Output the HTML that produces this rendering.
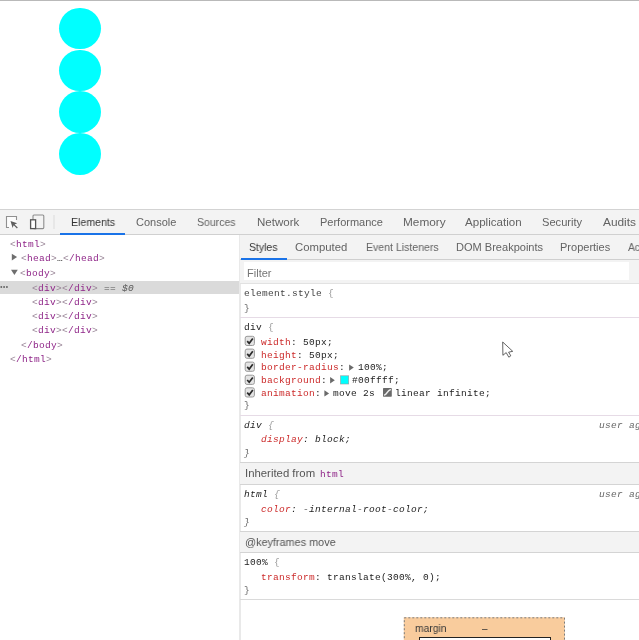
<!DOCTYPE html><html><head><meta charset="utf-8"><style>
html,body{margin:0;padding:0;background:#fff;width:639px;height:640px;overflow:hidden;position:relative}
.m,.s{will-change:transform}
.m{position:absolute;font-family:"Liberation Mono",monospace;font-size:9.5px;letter-spacing:0.3px;line-height:10px;white-space:pre}
.s{position:absolute;font-family:"Liberation Sans",sans-serif;line-height:11px;white-space:pre;transform-origin:0 0}
</style></head><body><div style="position:absolute;left:0;top:0;width:639px;height:1px;background:#b9b9b9"></div>
<div style="position:absolute;left:58.9px;top:7.60px;width:41.9px;height:41.9px;border-radius:50%;background:#00ffff"></div>
<div style="position:absolute;left:58.9px;top:49.50px;width:41.9px;height:41.9px;border-radius:50%;background:#00ffff"></div>
<div style="position:absolute;left:58.9px;top:91.40px;width:41.9px;height:41.9px;border-radius:50%;background:#00ffff"></div>
<div style="position:absolute;left:58.9px;top:133.30px;width:41.9px;height:41.9px;border-radius:50%;background:#00ffff"></div>
<div style="position:absolute;left:0;top:209px;width:639px;height:1px;background:#d3d3d3"></div>
<div style="position:absolute;left:0;top:210px;width:639px;height:24px;background:#f3f3f3"></div>
<div style="position:absolute;left:0;top:234px;width:639px;height:1px;background:#d0d0d0"></div>
<svg style="position:absolute;left:0;top:209px" width="60" height="26" viewBox="0 209 60 26">
<rect x="6.5" y="216.5" width="10" height="11" fill="#fcfcfc"/><path d="M9 227.5 H6.5 V216.5 H16.5 V220" fill="none" stroke="#909090" stroke-width="1.1"/>
<path d="M10.5 221 L17.2 223.3 L14.6 224.4 L17.8 227.6 L16.9 228.4 L13.7 225.3 L12.6 228 Z" fill="#5f5f5f"/>
<rect x="33" y="215" width="10.8" height="13.6" rx="1" fill="none" stroke="#8d8d8d" stroke-width="1.1"/>
<rect x="30.6" y="219.8" width="5" height="8.8" fill="#fff" stroke="#555" stroke-width="1.3"/>
<rect x="53.5" y="215" width="1" height="14" fill="#dcdcdc"/>
</svg>
<div class="s fit" style="transform:scaleX(0.9627);left:70.65px;top:217.30px;font-size:11px;color:#333">Elements</div>
<div class="s fit" style="transform:scaleX(0.9936);left:135.70px;top:217.30px;font-size:11px;color:#636363">Console</div>
<div class="s fit" style="transform:scaleX(0.9564);left:196.70px;top:217.30px;font-size:11px;color:#636363">Sources</div>
<div class="s fit" style="transform:scaleX(1.0485);left:256.50px;top:217.30px;font-size:11px;color:#636363">Network</div>
<div class="s fit" style="transform:scaleX(0.9971);left:319.70px;top:217.30px;font-size:11px;color:#636363">Performance</div>
<div class="s fit" style="transform:scaleX(1.0746);left:402.60px;top:217.30px;font-size:11px;color:#636363">Memory</div>
<div class="s fit" style="transform:scaleX(1.0515);left:465.40px;top:217.30px;font-size:11px;color:#636363">Application</div>
<div class="s fit" style="transform:scaleX(1.0113);left:542.10px;top:217.30px;font-size:11px;color:#636363">Security</div>
<div class="s fit" style="transform:scaleX(1.0792);left:603.40px;top:217.30px;font-size:11px;color:#636363">Audits</div>
<div style="position:absolute;left:60px;top:233px;width:65px;height:2px;background:#1a73e8"></div>
<div style="position:absolute;left:0;top:280.6px;width:239px;height:13px;background:#dadada"></div>
<div style="position:absolute;left:238.8px;top:235px;width:2.4px;height:405px;background:#e9e9e9"></div>
<div class="m" style="left:10.00px;top:240.00px;"><span style="color:#998597;">&lt;</span><span style="color:#8f2588;">html</span><span style="color:#998597;">&gt;</span></div>
<div class="m" style="left:20.90px;top:254.00px;"><span style="color:#998597;">&lt;</span><span style="color:#8f2588;">head</span><span style="color:#998597;">&gt;</span><span style="color:#222;">…</span><span style="color:#998597;">&lt;</span><span style="color:#8f2588;">/head</span><span style="color:#998597;">&gt;</span></div>
<div class="m" style="left:20.40px;top:269.00px;"><span style="color:#998597;">&lt;</span><span style="color:#8f2588;">body</span><span style="color:#998597;">&gt;</span></div>
<div class="m" style="left:32.40px;top:284.00px;"><span style="color:#998597;">&lt;</span><span style="color:#8f2588;">div</span><span style="color:#998597;">&gt;</span><span style="color:#998597;">&lt;</span><span style="color:#8f2588;">/div</span><span style="color:#998597;">&gt;</span></div>
<div class="m" style="left:98.40px;top:284.00px;"><span style="color:#555;"> == </span><span style="color:#555;font-style:italic">$0</span></div>
<div class="m" style="left:32.40px;top:298.00px;"><span style="color:#998597;">&lt;</span><span style="color:#8f2588;">div</span><span style="color:#998597;">&gt;</span><span style="color:#998597;">&lt;</span><span style="color:#8f2588;">/div</span><span style="color:#998597;">&gt;</span></div>
<div class="m" style="left:32.40px;top:312.00px;"><span style="color:#998597;">&lt;</span><span style="color:#8f2588;">div</span><span style="color:#998597;">&gt;</span><span style="color:#998597;">&lt;</span><span style="color:#8f2588;">/div</span><span style="color:#998597;">&gt;</span></div>
<div class="m" style="left:32.40px;top:326.00px;"><span style="color:#998597;">&lt;</span><span style="color:#8f2588;">div</span><span style="color:#998597;">&gt;</span><span style="color:#998597;">&lt;</span><span style="color:#8f2588;">/div</span><span style="color:#998597;">&gt;</span></div>
<div class="m" style="left:20.80px;top:341.00px;"><span style="color:#998597;">&lt;</span><span style="color:#8f2588;">/body</span><span style="color:#998597;">&gt;</span></div>
<div class="m" style="left:10.40px;top:355.00px;"><span style="color:#998597;">&lt;</span><span style="color:#8f2588;">/html</span><span style="color:#998597;">&gt;</span></div>
<svg style="position:absolute;left:0;top:250px" width="30" height="40" viewBox="0 250 30 40">
<path d="M11.8 253.8 L17.1 257.1 L11.8 260.5 Z" fill="#6e6e6e"/>
<path d="M11 269.8 L17.8 269.8 L14.4 274.9 Z" fill="#6e6e6e"/>
<rect x="0.5" y="286.2" width="1.6" height="1.6" fill="#555"/>
<rect x="3.3" y="286.2" width="1.6" height="1.6" fill="#555"/>
<rect x="6.1" y="286.2" width="1.6" height="1.6" fill="#555"/>
</svg>
<div style="position:absolute;left:240px;top:235px;width:399px;height:24px;background:#f3f3f3"></div>
<div style="position:absolute;left:240px;top:259px;width:399px;height:1px;background:#cfcfcf"></div>
<div style="position:absolute;left:241px;top:258px;width:46px;height:2px;background:#1a73e8"></div>
<div class="s fit" style="transform:scaleX(0.9510);left:248.80px;top:241.80px;font-size:11px;color:#333">Styles</div>
<div class="s fit" style="transform:scaleX(1.0302);left:295.10px;top:241.80px;font-size:11px;color:#636363">Computed</div>
<div class="s fit" style="transform:scaleX(0.9587);left:365.50px;top:241.80px;font-size:11px;color:#636363">Event Listeners</div>
<div class="s fit" style="transform:scaleX(1.0033);left:455.60px;top:241.80px;font-size:11px;color:#636363">DOM Breakpoints</div>
<div class="s fit" style="transform:scaleX(1.0012);left:560.40px;top:241.80px;font-size:11px;color:#636363">Properties</div>
<div class="s fit" style="transform:scaleX(0.9300);left:627.80px;top:241.80px;font-size:11px;color:#636363">Accessibility</div>
<div style="position:absolute;left:240px;top:260px;width:399px;height:23px;background:#f3f3f3"></div>
<div style="position:absolute;left:243.8px;top:261.8px;width:385.2px;height:18.6px;background:#fff"></div>
<div style="position:absolute;left:240px;top:282.7px;width:399px;height:1px;background:#e2e2e2"></div>
<div class="s fit" style="transform:scaleX(1.0495);left:247.00px;top:267.61px;font-size:10.5px;color:#757575">Filter</div>
<div class="m" style="left:244.20px;top:289.00px;"><span style="color:#444;">element.style </span><span style="color:#999;">{</span></div>
<div class="m" style="left:244.20px;top:304.00px;"><span style="color:#666;">}</span></div>
<div style="position:absolute;left:240px;top:317px;width:399px;height:1px;background:#e6dbe6"></div>
<div class="m" style="left:244.20px;top:323.00px;"><span style="color:#222;">div </span><span style="color:#999;">{</span></div>
<div class="m" style="left:261.00px;top:338.00px;"><span style="color:#cc2a2a;">width</span><span style="color:#222;">: 50px;</span></div>
<div class="m" style="left:261.00px;top:351.00px;"><span style="color:#cc2a2a;">height</span><span style="color:#222;">: 50px;</span></div>
<div class="m" style="left:261.00px;top:363.00px;"><span style="color:#cc2a2a;">border-radius</span><span style="color:#222;">:</span></div>
<div class="m" style="left:261.00px;top:376.00px;"><span style="color:#cc2a2a;">background</span><span style="color:#222;">:</span></div>
<div class="m" style="left:261.00px;top:389.00px;"><span style="color:#cc2a2a;">animation</span><span style="color:#222;">:</span></div>
<div class="m" style="left:357.60px;top:363.00px;"><span style="color:#222;">100%;</span></div>
<div class="m" style="left:351.60px;top:376.00px;"><span style="color:#222;">#00ffff;</span></div>
<div class="m" style="left:333.30px;top:389.00px;"><span style="color:#222;">move 2s</span></div>
<div class="m" style="left:395.00px;top:389.00px;"><span style="color:#222;">linear infinite;</span></div>
<div class="m" style="left:244.20px;top:401.00px;"><span style="color:#666;">}</span></div>
<svg style="position:absolute;left:0;top:0" width="639" height="640" viewBox="0 0 639 640"><rect x="245.2" y="336.30" width="9.2" height="9.2" rx="1.8" fill="#e4e4e4" stroke="#9a9a9a" stroke-width="1"/><path d="M247.2 341.10 L249.2 343.30 L252.8 338.50" fill="none" stroke="#2a2a2a" stroke-width="1.7"/><rect x="245.2" y="349.10" width="9.2" height="9.2" rx="1.8" fill="#e4e4e4" stroke="#9a9a9a" stroke-width="1"/><path d="M247.2 353.90 L249.2 356.10 L252.8 351.30" fill="none" stroke="#2a2a2a" stroke-width="1.7"/><rect x="245.2" y="362.10" width="9.2" height="9.2" rx="1.8" fill="#e4e4e4" stroke="#9a9a9a" stroke-width="1"/><path d="M247.2 366.90 L249.2 369.10 L252.8 364.30" fill="none" stroke="#2a2a2a" stroke-width="1.7"/><rect x="245.2" y="375.20" width="9.2" height="9.2" rx="1.8" fill="#e4e4e4" stroke="#9a9a9a" stroke-width="1"/><path d="M247.2 380.00 L249.2 382.20 L252.8 377.40" fill="none" stroke="#2a2a2a" stroke-width="1.7"/><rect x="245.2" y="387.80" width="9.2" height="9.2" rx="1.8" fill="#e4e4e4" stroke="#9a9a9a" stroke-width="1"/><path d="M247.2 392.60 L249.2 394.80 L252.8 390.00" fill="none" stroke="#2a2a2a" stroke-width="1.7"/><path d="M349.1 364.4 L353.8 367.6 L349.1 370.8 Z" fill="#6a6a6a"/><path d="M330.1 377.0 L334.8 380.2 L330.1 383.4 Z" fill="#6a6a6a"/><rect x="340.5" y="375.8" width="8.2" height="8.2" fill="#00ffff" stroke="#9a9a9a" stroke-width="0.6"/><path d="M324.4 390.2 L329.1 393.4 L324.4 396.6 Z" fill="#6a6a6a"/><rect x="383" y="388.1" width="8.8" height="8.6" rx="0.6" fill="#6a6a6a"/><path d="M384.6 394.9 C387.2 394.6 387.4 390.2 390.3 389.8" fill="none" stroke="#eee" stroke-width="1.5" stroke-linecap="round"/><path d="M502.7 342 L502.9 355.3 L506.2 352.6 L508.8 357.2 L510.8 355.8 L508.6 352.2 L512.7 351.3 Z" fill="#fff" stroke="#222" stroke-width="0.7"/></svg>
<div style="position:absolute;left:240px;top:415.3px;width:399px;height:1px;background:#e6dbe6"></div>
<div class="m" style="left:244.20px;top:421.00px;font-style:italic;"><span style="color:#222;">div </span><span style="color:#999;">{</span></div>
<div class="m" style="left:599.20px;top:421.00px;font-style:italic;"><span style="color:#666;">user agent stylesheet</span></div>
<div class="m" style="left:261.00px;top:435.00px;font-style:italic;"><span style="color:#cc2a2a;">display</span><span style="color:#222;">: block;</span></div>
<div class="m" style="left:244.20px;top:449.00px;font-style:italic;"><span style="color:#666;">}</span></div>
<div style="position:absolute;left:240px;top:461.8px;width:399px;height:1px;background:#d4d4d4"></div>
<div style="position:absolute;left:240px;top:462.8px;width:399px;height:21.9px;background:#f3f3f3"></div>
<div style="position:absolute;left:240px;top:484.4px;width:399px;height:1px;background:#d4d4d4"></div>
<div class="s fit" style="transform:scaleX(1.0328);left:244.70px;top:468.20px;font-size:11px;color:#555">Inherited from</div>
<div class="m" style="left:320.00px;top:470.00px;"><span style="color:#8f2588;">html</span></div>
<div class="m" style="left:244.20px;top:490.00px;font-style:italic;"><span style="color:#222;">html </span><span style="color:#999;">{</span></div>
<div class="m" style="left:599.20px;top:490.00px;font-style:italic;"><span style="color:#666;">user agent stylesheet</span></div>
<div class="m" style="left:261.00px;top:505.00px;font-style:italic;"><span style="color:#cc2a2a;">color</span><span style="color:#222;">: -internal-root-color;</span></div>
<div class="m" style="left:244.20px;top:518.00px;font-style:italic;"><span style="color:#666;">}</span></div>
<div style="position:absolute;left:240px;top:530.8px;width:399px;height:1px;background:#d4d4d4"></div>
<div style="position:absolute;left:240px;top:531.8px;width:399px;height:20px;background:#f3f3f3"></div>
<div style="position:absolute;left:240px;top:551.8px;width:399px;height:1px;background:#d4d4d4"></div>
<div class="s fit" style="transform:scaleX(0.9874);left:244.70px;top:537.40px;font-size:11px;color:#555">@keyframes move</div>
<div class="m" style="left:244.20px;top:558.00px;"><span style="color:#222;">100% </span><span style="color:#999;">{</span></div>
<div class="m" style="left:261.00px;top:573.00px;"><span style="color:#cc2a2a;">transform</span><span style="color:#222;">: translate(300%, 0);</span></div>
<div class="m" style="left:244.20px;top:586.00px;"><span style="color:#666;">}</span></div>
<div style="position:absolute;left:240px;top:599.3px;width:399px;height:1px;background:#dadada"></div>
<svg style="position:absolute;left:0;top:600px" width="639" height="40" viewBox="0 600 639 40"><rect x="403.8" y="617.3" width="161" height="40" fill="#f9cc9d"/><rect x="404.3" y="617.8" width="160.2" height="40" fill="none" stroke="#7c7c7c" stroke-width="1" stroke-dasharray="2 2"/></svg>
<div class="s fit" style="transform:scaleX(0.9368);left:414.60px;top:622.70px;font-size:11px;color:#3a3a3a">margin</div>
<div class="s fit" style="transform:scaleX(0.8980);left:481.80px;top:622.70px;font-size:11px;color:#333">–</div>
<div style="position:absolute;left:418.8px;top:636.9px;width:130.6px;height:20px;background:#fff;border:1px solid #222"></div></body></html>
